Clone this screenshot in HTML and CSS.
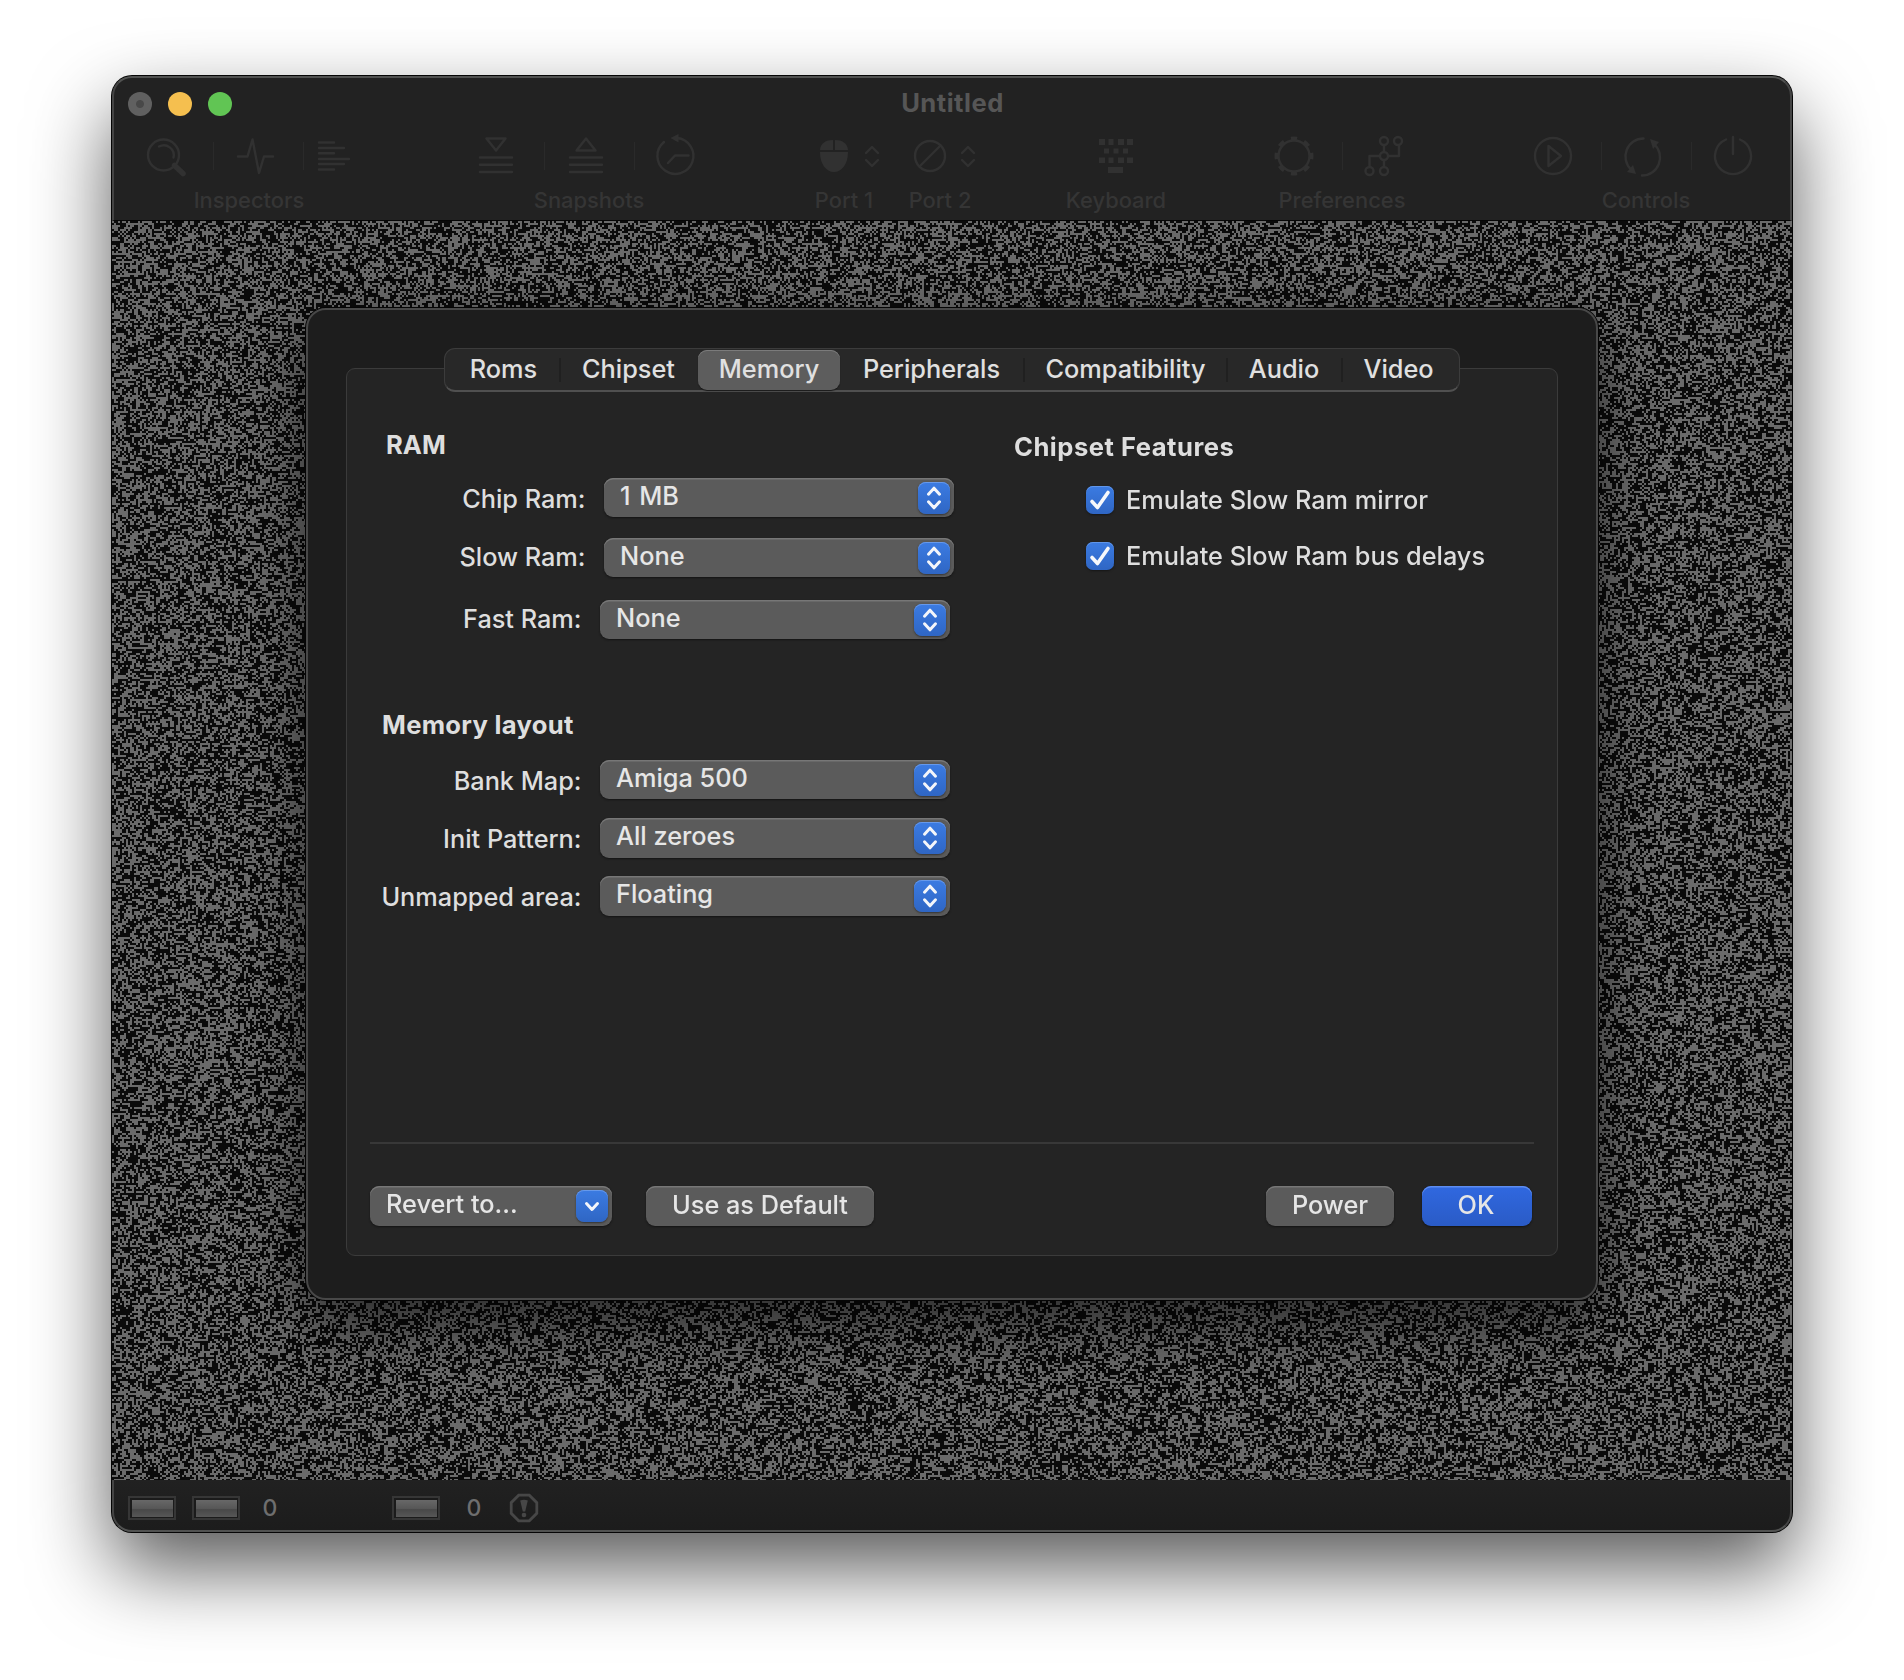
FILE: index.html
```html
<!DOCTYPE html>
<html lang="en">
<head>
<meta charset="utf-8">
<title>Untitled</title>
<link rel="stylesheet" href="styles.css">
</head>
<body>
<svg class="defs" width="0" height="0" aria-hidden="true">
  <symbol id="updown" viewBox="0 0 32 32"><path d="M10.500 12.200 16 6.200l5.500 6M10.500 19.800l5.500 6 5.500-6"/></symbol>
  <symbol id="down" viewBox="0 0 32 32"><path d="M10.500 13.500 16 19.500l5.500-6"/></symbol>
  <symbol id="check" viewBox="0 0 28 28"><path d="M6 15.500 11.500 21.500 22 6.500"/></symbol>
</svg>
<main class="window">
  <header class="toolbar">
    <div class="titlebar">
      <div class="lights"><i class="light close"></i><i class="light minimize"></i><i class="light zoom"></i></div>
      <h1 class="title">Untitled</h1>
    </div>
    <div class="tools">
      <section class="group inspectors">
        <div class="icons">
          <svg class="icon" viewBox="123 136 90 42"><circle cx="163.500" cy="155" r="15.500"/><path d="M159 146.500a10 10 0 0 1 14.500 11"/><path class="thick" d="M174.500 165.500l8.500 8"/></svg>
          <svg class="icon" viewBox="213 136 90 42"><path d="M238 156.500h9.500l5-17 6.500 33.500 5-16.500h9"/></svg>
          <svg class="icon" viewBox="303 136 90 42"><path d="M319 142.500h15M319 148h25M319 153.300h15M319 159h30M319 164h25M319 169.500h15"/></svg>
        </div>
        <div class="caption">Inspectors</div>
      </section>
      <section class="group snapshots">
        <div class="icons">
          <svg class="icon" viewBox="454 136 90 42"><path d="M486.500 138.500h19l-9.500 12zM480 157.500h32M480 164.800h32M480 172h32"/></svg>
          <svg class="icon" viewBox="544 136 90 42"><path d="M576.500 150.500h19l-9.500-12zM570 157.500h32M570 164.800h32M570 172h32"/></svg>
          <svg class="icon" viewBox="634 136 90 42"><path d="M664 142a18 18 0 1 0 13-4M688.500 155.500H675l-7 7.500"/><path class="solid" d="M670.500 138l8-4v8.500z"/></svg>
        </div>
        <div class="caption">Snapshots</div>
      </section>
      <section class="group port1">
        <div class="icons">
          <svg class="icon" viewBox="804 136 80 42"><path class="solid" d="M820 150c.500-7 6-10 13-10v10zM835 140c7 0 12.500 3 13 10h-13zM820 152h28c0 12-6 20-14 20s-14-8-14-20z"/><path d="M866 153l6-6 6 6M866 160l6 6 6-6"/></svg>
        </div>
        <div class="caption">Port 1</div>
      </section>
      <section class="group port2">
        <div class="icons">
          <svg class="icon" viewBox="900 136 80 42"><path d="M919.500 166.500l21-21"/><circle cx="930" cy="156" r="15"/><path d="M962 153l6-6 6 6M962 160l6 6 6-6"/></svg>
        </div>
        <div class="caption">Port 2</div>
      </section>
      <section class="group keyboard">
        <div class="icons">
          <svg class="icon" viewBox="1061 136 110 42"><path class="solid" d="M1099 139h6v6h-6zM1108.500 139h5v6h-5zM1118 139h6v6h-6zM1127 139h6v6h-6zM1104 148.500h5v5h-5zM1113.500 148.500h5v5h-5zM1123 148.500h5v5h-5zM1099 157.500h6v5.500h-6zM1108.500 157.500h5v5.500h-5zM1118 157.500h6v5.500h-6zM1127 157.500h6v5.500h-6zM1108 167h15v6h-15z"/></svg>
        </div>
        <div class="caption">Keyboard</div>
      </section>
      <section class="group preferences">
        <div class="icons">
          <svg class="icon" viewBox="1252 136 90 42"><circle cx="1294" cy="156" r="15.500"/><circle class="teeth" cx="1294" cy="156" r="17.500" pathLength="80"/></svg>
          <svg class="icon" viewBox="1342 136 90 42"><circle cx="1384" cy="141" r="4"/><circle cx="1398" cy="141" r="4"/><circle cx="1384" cy="156" r="4"/><circle cx="1369.500" cy="171" r="4"/><circle cx="1384" cy="171" r="4"/><path d="M1384 145v7M1384 160v7M1388 156h11v-11M1380 156h-10.500v11"/></svg>
        </div>
        <div class="caption">Preferences</div>
      </section>
      <section class="group controls">
        <div class="icons">
          <svg class="icon" viewBox="1511 136 90 42"><circle cx="1553" cy="156" r="18"/><path d="M1548.500 146l12.500 10-12.500 10z"/></svg>
          <svg class="icon" viewBox="1601 136 90 42"><path d="M1643.500 138.500a18 18 0 0 0-12.500 31M1642 175.500a18 18 0 0 0 12.500-31"/><path class="solid" d="M1650 139l9 3-6 7zM1636 174l-9-2 6-7z"/></svg>
          <svg class="icon" viewBox="1691 136 90 42"><path d="M1726 139.500a18 18 0 1 0 14 0M1733 137v17"/></svg>
        </div>
        <div class="caption">Controls</div>
      </section>
    </div>
  </header>

  <div class="screen">
    <canvas class="noise" id="noise" width="840" height="630"></canvas>
    <div class="dialog">
      <nav class="tabs">
        <span class="tab roms">Roms</span><span class="tab chipset">Chipset</span><span class="tab selected">Memory</span><span class="tab peripherals">Peripherals</span><span class="tab compatibility">Compatibility</span><span class="tab audio">Audio</span><span class="tab video">Video</span>
      </nav>
      <div class="panel">
        <div class="columns">
          <div class="left">
            <h2 class="heading ram">RAM</h2>
            <div class="row chip"><span class="label">Chip Ram:</span><span class="select"><span class="value">1 MB</span><svg class="knob"><use href="#updown"/></svg></span></div>
            <div class="row slow"><span class="label">Slow Ram:</span><span class="select"><span class="value">None</span><svg class="knob"><use href="#updown"/></svg></span></div>
            <div class="row fast"><span class="label">Fast Ram:</span><span class="select"><span class="value">None</span><svg class="knob"><use href="#updown"/></svg></span></div>
            <h2 class="heading layout">Memory layout</h2>
            <div class="row bank"><span class="label">Bank Map:</span><span class="select"><span class="value">Amiga 500</span><svg class="knob"><use href="#updown"/></svg></span></div>
            <div class="row init"><span class="label">Init Pattern:</span><span class="select"><span class="value">All zeroes</span><svg class="knob"><use href="#updown"/></svg></span></div>
            <div class="row unmapped"><span class="label">Unmapped area:</span><span class="select"><span class="value">Floating</span><svg class="knob"><use href="#updown"/></svg></span></div>
          </div>
          <div class="right">
            <h2 class="heading features">Chipset Features</h2>
            <div class="option"><svg class="checkbox"><use href="#check"/></svg><span>Emulate Slow Ram mirror</span></div>
            <div class="option"><svg class="checkbox"><use href="#check"/></svg><span>Emulate Slow Ram bus delays</span></div>
          </div>
        </div>
        <footer class="actions">
          <span class="select revert"><span class="value">Revert to...</span><svg class="knob"><use href="#down"/></svg></span>
          <span class="button default">Use as Default</span>
          <span class="button power">Power</span>
          <span class="button ok">OK</span>
        </footer>
      </div>
    </div>
  </div>

  <footer class="status">
    <i class="led"></i><i class="led second"></i><span class="count">0</span>
    <i class="led third"></i><span class="count last">0</span>
    <svg class="warn" viewBox="0 0 30 30"><path class="ring" d="M9.700 2.200h10.600l7.500 7.500v10.600l-7.500 7.500H9.700l-7.500-7.500V9.700z"/><path class="mark" d="M11.200 7.500q3.800-1.500 7.600 0l-2.600 11h-2.400z"/><circle class="mark" cx="15" cy="22" r="2.300"/></svg>
  </footer>
</main>
<script src="noise.js"></script>
</body>
</html>
```
FILE: styles.css
```css
* { box-sizing: border-box; }

body {
  margin: 0;
  width: 1904px;
  height: 1680px;
  overflow: hidden;
  background: #fff;
  color: #dedede;
  font: 450 25.300px/30px Inter, "Liberation Sans", sans-serif;
  white-space: nowrap;
}

h1, h2 { margin: 0; font-size: 25.600px; line-height: 30px; font-weight: 700; }
.defs { display: block; }

.window {
  display: flex;
  flex-direction: column;
  width: 1680px;
  height: 1456px;
  margin: 76px 0 0 112px;
  border-radius: 20px;
  background: #222;
  box-shadow: 0 0 0 1px #050505, 0 36px 80px rgba(0, 0, 0, .66);
}

/* light rim over the bars' outer edge */
.toolbar, .status { border: 2px solid #515251; }

.toolbar {
  flex: none;
  height: 145px;
  border-bottom: 1px solid #060606;
  border-radius: 20px 20px 0 0;
  border-left-color: #444;
  border-right-color: #444;
}

.titlebar { display: grid; height: 50px; align-items: center; }
.titlebar > * { grid-area: 1 / 1; }
.title { margin-top: -1px; padding-left: 1px; text-align: center; color: #565656; letter-spacing: .500px; }
.lights { display: flex; gap: 16px; padding-left: 14px; margin-top: 2px; }
.light { width: 24px; height: 24px; border-radius: 50%; }
.close { background: radial-gradient(circle, #484848 3.500px, #606060 4.500px); }
.minimize { background: #f5bf4f; }
.zoom { background: #61c554; }

.tools { display: flex; padding-top: 8px; }
.icons { display: flex; height: 42px; }
.icon {
  flex: 1;
  height: 42px;
  overflow: visible;
  fill: none;
  stroke: #313131;
  stroke-width: 2.400;
  stroke-linejoin: round;
  stroke-linecap: round;
}
.icon + .icon { background: linear-gradient(#2a2a2a, #2a2a2a) 0 6px / 1px 28px no-repeat; }
.icon .solid { fill: #313131; stroke: none; }
.icon .thick { stroke-width: 5.500; }
.icon .teeth { stroke-width: 4; stroke-linecap: butt; stroke-dasharray: 4.600 5.400; stroke-dashoffset: 2.300; }
.caption {
  padding-top: 7px;
  text-align: center;
  font-size: 21.900px;
  color: #353535;
}
.inspectors { width: 270px; margin-left: 9px; }
.inspectors .caption { padding-right: 18px; }
.snapshots { width: 270px; margin-left: 61px; }
.port1 { width: 80px; margin-left: 80px; }
.port2 { width: 80px; margin-left: 16px; }
.keyboard { width: 110px; margin-left: 81px; }
.preferences { width: 180px; margin-left: 81px; }
.controls { width: 270px; margin-left: 79px; }

.screen { display: grid; flex: none; height: 1259px; overflow: hidden; }
.screen > * { grid-area: 1 / 1; }
.noise { display: block; width: 1680px; height: 1260px; image-rendering: pixelated; }

.dialog {
  z-index: 1;
  width: 1292px;
  height: 992px;
  margin: 87px 0 0 194px;
  padding: 38px 38px 0;
  border: 2px solid #484848;
  border-radius: 20px;
  background: #1d1d1d;
  box-shadow: 0 0 0 1px #050505, 0 24px 62px rgba(0, 0, 0, .62);
}

.tabs {
  position: relative;
  display: flex;
  width: 1016px;
  height: 44px;
  margin: 0 0 -24px 98px;
  padding: 1px;
  border: 1px solid #3c3c3c;
  border-bottom: 2px solid #505050;
  border-radius: 11px;
  background: #282828;
}
.tab { height: 40px; line-height: 37px; text-align: center; color: #e0e0e0; }
.roms { width: 113px; padding-left: 2px; }
.chipset { width: 139px; }
.selected {
  width: 142px;
  border-radius: 9px;
  background: #5d5d5d;
  box-shadow: inset 0 1px #7b7b7b, 0 1px 1px #181818;
}
.peripherals { width: 183px; }
.compatibility { width: 203px; padding-left: 2px; }
.audio { width: 115px; padding-left: 1px; }
.video { width: 115px; }
.chipset, .compatibility, .audio, .video {
  background: linear-gradient(#202020, #202020) 0 8px / 2px 24px no-repeat;
}

.panel {
  width: 1212px;
  height: 888px;
  padding: 0 18px 0 24px;
  border: 1px solid #3b3b3b;
  border-radius: 9px;
  background: #242424;
}
.columns { display: flex; height: 773px; }
.left { width: 643px; padding-top: 61px; }
.right { padding-top: 63px; }

.heading { color: #dedede; letter-spacing: .500px; }
.ram { margin-left: 15px; letter-spacing: 0; }
.layout { margin: 71px 0 0 11px; letter-spacing: .300px; }

.row { display: flex; height: 39px; }
.label { width: 210.500px; text-align: right; flex: none; }
.select {
  display: flex;
  justify-content: space-between;
  width: 350px;
  height: 100%;
  padding: 4px 4px 0 16px;
  border-radius: 9px;
  background: #5b5b5b;
  box-shadow: inset 0 1.500px #777, 0 1px 2px #141414;
  color: #e6e6e6;
}
.row .select { margin-left: 18.500px; }
.value { margin-top: -1px; }
.chip .value { word-spacing: 2px; }
.knob {
  width: 32px;
  height: 32px;
  margin-top: -.5px;
  border-radius: 8px;
  background: linear-gradient(#3b7be2, #2f66c4);
  box-shadow: inset 0 1px #6799ea, 0 1px 2px #333;
  fill: none;
  stroke: #f4f6fa;
  stroke-width: 3;
  stroke-linecap: round;
  stroke-linejoin: round;
}
.chip { margin-top: 18px; padding-left: 4px; }
.chip .label { padding-top: 6px; }
.slow { margin-top: 21px; padding-left: 4px; }
.slow .label { padding-top: 4px; }
.fast { margin-top: 23px; }
.fast .label { padding-top: 4px; }
.bank { margin-top: 20px; }
.bank .label { padding-top: 6px; }
.init { margin-top: 19px; height: 40px; }
.init .label { padding-top: 6px; }
.unmapped { margin-top: 18px; height: 40px; }
.unmapped .label { padding-top: 6px; }

.option { display: flex; align-items: center; gap: 12px; height: 28px; margin: 24px 0 0 72px; }
.option + .option { margin-top: 28px; }
.checkbox {
  width: 28px;
  height: 28px;
  border-radius: 7px;
  background: linear-gradient(#3b7be2, #2f66c4);
  box-shadow: inset 0 1px #6096ea, 0 1px 2px #161616;
  fill: none;
  stroke: #f6f8fb;
  stroke-width: 3.600;
  stroke-linecap: round;
  stroke-linejoin: round;
}

.actions {
  display: flex;
  width: 1164px;
  height: 84px;
  margin-left: -1px;
  padding-top: 42px;
  border-top: 2px solid #383838;
}
.revert { width: 242px; height: 40px; }
.button {
  height: 40px;
  line-height: 38px;
  text-align: center;
  border-radius: 9px;
  background: #5b5b5b;
  box-shadow: inset 0 1.500px #777, 0 1px 2px #141414;
  color: #e6e6e6;
}
.default { width: 228px; margin-left: 34px; }
.power { width: 128px; margin-left: auto; }
.ok {
  width: 110px;
  margin: 0 2px 0 28px;
  padding-right: 2px;
  background: linear-gradient(#3068e0, #2a5bc6);
  box-shadow: inset 0 1.500px #5d8cf0, 0 1px 2px #141414;
}

.status {
  display: flex;
  flex: 1;
  padding: 16px 0 0 14px;
  border-top: 0;
  border-color: #444;
  border-bottom-color: #515251;
  border-radius: 0 0 20px 20px;
  background: linear-gradient(#212121, #1c1c1c);
}
.led {
  width: 48px;
  height: 24px;
  border: 2px solid #363636;
  background: linear-gradient(#686868, #555 55%, #484848 56%, #575757) center / 41px 17px no-repeat #1b1b1b;
}
.second { margin-left: 16px; }
.third { margin-left: 113px; }
.count { width: 18px; margin: -3px 0 0 21px; text-align: center; color: #6e6e6e; font-size: 23px; }
.last { margin-left: 25px; }
.warn { width: 30px; height: 30px; margin: -3px 0 0 26px; }
.ring { fill: none; stroke: #474747; stroke-width: 2.800; }
.mark { fill: #474747; }
```
FILE: noise.js
```js
// Two-tone static for the idle monitor, seeded so that every load looks alike.
const canvas = document.getElementById('noise');
const context = canvas.getContext('2d');
const image = context.createImageData(canvas.width, canvas.height);
let seed = 0x2f6e2b1;
let tone = 11;
for (let i = 0; i < image.data.length; i += 4) {
  seed ^= seed << 13;
  seed ^= seed >>> 17;
  seed ^= seed << 5;
  // one cell in eight keeps its neighbour's tone, as horizontal streaks
  if ((seed >>> 20) & 7) tone = ((seed >>> 8) & 255) < 124 ? 106 : 11;
  image.data[i] = image.data[i + 1] = image.data[i + 2] = tone;
  image.data[i + 3] = 255;
}
context.putImageData(image, 0, 0);
```
